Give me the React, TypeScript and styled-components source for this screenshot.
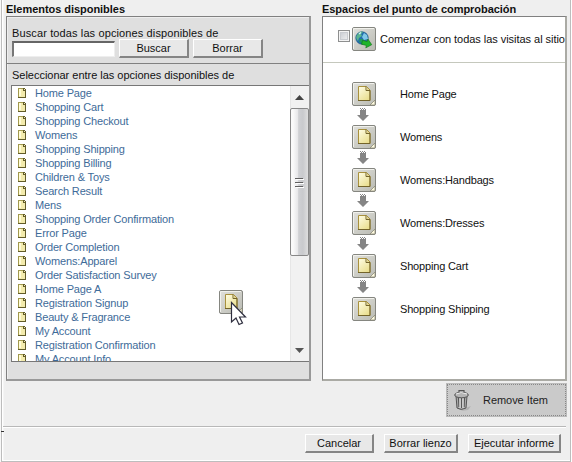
import React from "react";
import styled, { createGlobalStyle } from "styled-components";

const Global = createGlobalStyle`
  *, *::before, *::after { box-sizing: border-box; }
  body { margin: 0; background: #efefef; overflow: hidden; }
  button, input { font: inherit; }
`;

const Window = styled.div`
  width: 570px;
  height: 462px;
  margin-left: 1px;
  border: solid #bdbdbd;
  border-width: 0 1px 1px 1px;
  box-shadow: inset 1px 0 #fff, inset 2px 0 #fff6, inset 0 -1px #fff, 1px 0 #fff, -1px 0 #f8f8f8;
  background: #efefef;
  font: 11px/14px "Liberation Sans", Arial, sans-serif;
  color: #111;
  display: flex;
  flex-direction: column;
  position: relative;
`;

const Columns = styled.div`
  display: grid;
  grid-template-columns: 305px 245px;
  column-gap: 11px;
  padding-left: 4px;
  height: 381px;
`;

const Column = styled.section`
  display: flex;
  flex-direction: column;
  min-width: 0;
`;

const Label = styled.span<{ $spacing?: number }>`
  display: block;
  white-space: nowrap;
  letter-spacing: ${(p) => p.$spacing ?? 0}px;
`;

const Heading = styled.h2`
  margin: 0;
  height: 16px;
  padding-top: 2px;
  font-size: 11px;
  line-height: 14px;
  white-space: nowrap;
  letter-spacing: -0.04px;
`;

const Panel = styled.div<{ $plain?: boolean }>`
  height: 365px;
  border: 1px solid #808080;
  background: ${(p) => (p.$plain ? "#fff" : "#dfdfdf")};
  border-right: ${(p) => (p.$plain ? "2px solid #aaaaa4" : "2px solid #999")};
  border-bottom: ${(p) => (p.$plain ? "2px solid #aaaaa4" : "2px solid #999")};
  box-shadow: ${(p) => (p.$plain ? "none" : "inset 1px 1px #eee")};
`;

const Search = styled.div`
  height: 47px;
  padding: 9px 0 0 5px;
  border-bottom: 1px solid #808080;
`;

const SearchRow = styled.div`
  display: flex;
  align-items: flex-start;
  height: 20px;
  margin-top: -1px;
`;

const Field = styled.input`
  width: 103px;
  height: 16px;
  margin: 2px 4px 0 0;
  padding: 0 2px;
  background: #fff;
  border: solid;
  border-width: 2px 1px 1px 2px;
  border-color: #666 #eee #eee #777;
  outline: 0;
`;

const PushButton = styled.button<{ $w: number }>`
  width: ${(p) => p.$w}px;
  height: 19px;
  margin: 0 4px 0 0;
  padding: 0;
  background: #e8e8e8;
  border: solid;
  border-width: 1px 2px 2px 1px;
  border-color: #fff #858585 #858585 #fff;
  color: #111;
  line-height: 15px;
  white-space: nowrap;
`;

const ListTitle = styled.div`
  padding: 4px 0 0 5px;
  height: 21px;
`;

const ListBox = styled.div`
  margin-left: 4px;
  height: 277px;
  background: #fff;
  border: 1px solid #777;
  border-right: 0;
  display: flex;
  position: relative;
`;

const Items = styled.ul`
  list-style: none;
  margin: 0;
  padding: 0 0 0 6px;
  flex: 1;
  height: 275px;
  overflow: hidden;
  color: #3e6b99;
`;

const Item = styled.li`
  display: flex;
  align-items: center;
  gap: 9px;
  height: 14px;
  white-space: nowrap;
  letter-spacing: -0.15px;
`;

const Scrollbar = styled.div`
  width: 19px;
  background: #f1f1f1;
  border-left: 1px solid #e6e6e6;
  display: flex;
  flex-direction: column;
  align-items: stretch;
`;

const ScrollArrow = styled.div`
  height: 22px;
  padding-right: 1px;
  display: flex;
  align-items: center;
  justify-content: center;
`;

const Track = styled.div`
  flex: 1;
`;

const Thumb = styled.div`
  height: 148px;
  margin-left: -1px;
  border: 1px solid #888;
  border-radius: 2px;
  background: linear-gradient(90deg, #fafafa 0 12%, #e7e7e9 40%, #cfd0d3 45%, #c9cacd 70%, #dedede);
  display: flex;
  align-items: center;
  justify-content: center;
`;

const Drag = styled.div`
  position: absolute;
  left: 207px;
  top: 204px;
`;

const AllVisits = styled.div`
  height: 46px;
  border-bottom: 1px solid #c5c8bd;
  padding: 10px 0 0 15px;
  display: flex;
  align-items: flex-start;
`;

const Checkbox = styled.span`
  width: 12px;
  height: 12px;
  flex: none;
  margin: 3px 2px 0 0;
  border: 1px solid #8e8f8f;
  background: linear-gradient(135deg, #c2c6cd, #f5f5f5);
  box-shadow: inset 0 0 0 1px #f4f4f4, inset 0 0 0 2px #c9ccd1;
`;

const VisitsText = styled.div`
  margin: 5px 0 0 4px;
`;

const Flow = styled.ol`
  list-style: none;
  margin: 0;
  padding: 19px 0 0 29px;
`;

const Step = styled.li`
  height: 43px;
  display: grid;
  grid-template-columns: 24px auto;
  grid-template-rows: 24px 19px;
  column-gap: 24px;
`;

const StepName = styled.span`
  padding-top: 5px;
  white-space: nowrap;
  letter-spacing: -0.17px;
`;

const ArrowCell = styled.div`
  padding: 2px 0 0 5px;
  height: 19px;
`;

const RemoveRow = styled.div`
  display: flex;
  justify-content: flex-end;
  height: 45px;
  padding: 2px 3px 0 0;
`;

const RemoveButton = styled.button`
  width: 121px;
  height: 34px;
  padding: 0 0 0 6px;
  background: #cacaca;
  border: 1px solid #bbb;
  outline: 1px dotted #888;
  outline-offset: -2px;
  display: flex;
  align-items: center;
  gap: 11px;
  color: #222;
  letter-spacing: -0.05px;
`;

const Footer = styled.footer`
  margin: 0 4px 0 1px;
  border-top: 1px solid #b8b8b8;
  box-shadow: inset 0 1px #fff;
  height: 34px;
  padding: 7px 0 0 302px;
  display: flex;
  gap: 6px;
`;

const Tick = styled.span`
  position: absolute;
  left: -1px;
  top: 431px;
  width: 3px;
  height: 1px;
  background: #333;
`;

const Drawing = styled.svg`
  display: block;
  flex: none;
`;

const SmallPage = () => (
  <Drawing width="8" height="10" viewBox="0 0 8 10" shapeRendering="crispEdges">
    <path d="M0 0H6L8 2V10H0Z" fill="#a29a4e" />
    <path d="M1 1H5V3H7V9H1Z" fill="#f3ebad" />
    <path d="M1 1H3V8H1Z" fill="#fffbd6" />
    <path d="M5 0H7V1H8V3H5Z M7 3H8V10H0V9H7Z" fill="#625c29" />
    <path d="M6 1H7V2H6Z" fill="#f3edbd" />
  </Drawing>
);

const Tile = ({ children, corner = false }: { children: React.ReactNode; corner?: boolean }) => (
  <Drawing width="24" height="24" viewBox="0 0 24 24">
    <defs>
      <linearGradient id="tile" x2="1" y2="1">
        <stop stopColor="#e1e1dc" />
        <stop offset="1" stopColor="#b9bab2" />
      </linearGradient>
      <linearGradient id="paper" x2="0.7" y2="1">
        <stop stopColor="#fffde5" />
        <stop offset="1" stopColor="#eadf91" />
      </linearGradient>
    </defs>
    <rect x="0.5" y="0.5" width="23" height="23" rx="1.5" fill="url(#tile)" stroke="#858680" />
    <path d="M1.5 22V1.5H22" fill="none" stroke="#f1f1ec" />
    {children}
    {corner && <path d="M23 18V23H18Z" fill="#fffbe0" stroke="#8a8a78" strokeWidth=".8" />}
  </Drawing>
);

const PageTile = () => (
  <Tile corner>
    <path d="M6.5 4.5H14.5L18 8V18.5H6.5Z" fill="url(#paper)" stroke="#a9913d" />
    <path d="M14 4.5V8.5H18V18.5H6" fill="none" stroke="#73642a" />
    <path d="M14.8 5.5V7.7H17Z" fill="#d8c981" />
  </Tile>
);

const GlobeTile = () => (
  <Tile>
    <circle cx="10" cy="11" r="6.2" fill="#236fae" stroke="#195583" strokeWidth=".7" />
    <path d="M5 8Q8 3 11 5L9 7 10 9 7 11 6 14Q3 11 5 8Z" fill="#5ab58f" />
    <path d="M12 6L15 8 16 12 12 13 10 10Z" fill="#81c9e8" />
    <path d="M8 12L11 12 10 16 7 15Z" fill="#1f9b5f" />
    <path d="M7 7L9 5.5" stroke="#d4f5ff" strokeWidth="1.3" />
    <path d="M10 14.5H15V12L20 16.5 15 21V18.5H10Z" transform="rotate(14 15 16)" fill="#20b52b" stroke="#14771c" strokeWidth=".6" />
  </Tile>
);

const DownArrow = () => (
  <Drawing width="12" height="14" viewBox="0 0 12 14">
    <path d="M3 2H9V7H12L6 13 0 7H3Z" fill="#858585" />
    <path d="M3 .5H4M5 .5H6M7 .5H8M4 1.5H5M6 1.5H7M8 1.5H9" stroke="#858585" />
  </Drawing>
);

const TrashIcon = () => (
  <Drawing width="19" height="23" viewBox="0 0 19 23">
    <path d="M13 19L18 17 15 21 8 22Z" fill="#999" opacity=".5" />
    <path d="M3 7H14L13 19Q8 22 4 19Z" fill="#aaa" stroke="#555" />
    <path d="M5.5 9L6 18M8.5 9V19M11.5 9L11 18" stroke="#555" strokeWidth="1.2" />
    <path d="M7 9V19M10 9V19" stroke="#eee" />
    <ellipse cx="8.5" cy="6" rx="6.8" ry="2.8" fill="#b5b5b5" stroke="#555" />
    <path d="M3 5Q8 2 14 5" stroke="#eee" fill="none" />
    <path d="M6 3V1.5H11V3" fill="none" stroke="#555" strokeWidth="1.2" />
  </Drawing>
);

const DraggedPage = () => (
  <Drawing width="30" height="38" viewBox="0 0 30 38">
    <PageTile />
    <path d="M12.5 12.5V32L17 28 20 34.5 23.5 33 20.5 27H26.5Z" fill="#fff" stroke="#2e2e3e" strokeWidth="1.2" />
  </Drawing>
);

const Grip = () => (
  <Drawing width="9" height="11" shapeRendering="crispEdges">
    <path d="M0 1.5H8M0 5.5H8M0 9.5H8" stroke="#606060" />
    <path d="M1 2.5H9M1 6.5H9M1 10.5H9" stroke="#fff" />
  </Drawing>
);

const available = [
  "Home Page", "Shopping Cart", "Shopping Checkout", "Womens", "Shopping Shipping",
  "Shopping Billing", "Children & Toys", "Search Result", "Mens",
  "Shopping Order Confirmation", "Error Page", "Order Completion", "Womens:Apparel",
  "Order Satisfaction Survey", "Home Page A", "Registration Signup", "Beauty & Fragrance",
  "My Account", "Registration Confirmation", "My Account Info",
];

const checkpoints = ["Home Page", "Womens", "Womens:Handbags", "Womens:Dresses", "Shopping Cart", "Shopping Shipping"];

export default function App() {
  return (
    <>
      <Global />
      <Window>
        <Columns>
          <Column>
            <Heading>Elementos disponibles</Heading>
            <Panel>
              <Search>
                <Label $spacing={0.12}>Buscar todas las opciones disponibles de</Label>
                <SearchRow>
                  <Field aria-label="Buscar" />
                  <PushButton $w={70}>Buscar</PushButton>
                  <PushButton $w={70}>Borrar</PushButton>
                </SearchRow>
              </Search>
              <ListTitle>
                <Label $spacing={-0.02}>Seleccionar entre las opciones disponibles de</Label>
              </ListTitle>
              <ListBox>
                <Items>
                  {available.map((name) => (
                    <Item key={name}><SmallPage />{name}</Item>
                  ))}
                </Items>
                <Scrollbar>
                  <ScrollArrow>
                    <Drawing width="9" height="5"><path d="M0 5L4.5 0 9 5Z" fill="#444" /></Drawing>
                  </ScrollArrow>
                  <Thumb><Grip /></Thumb>
                  <Track />
                  <ScrollArrow>
                    <Drawing width="9" height="5"><path d="M0 0L4.5 5 9 0Z" fill="#555" /></Drawing>
                  </ScrollArrow>
                </Scrollbar>
                <Drag><DraggedPage /></Drag>
              </ListBox>
            </Panel>
          </Column>
          <Column>
            <Heading>Espacios del punto de comprobación</Heading>
            <Panel $plain>
              <AllVisits>
                <Checkbox />
                <GlobeTile />
                <VisitsText>
                  <Label $spacing={-0.04}>Comenzar con todas las visitas al sitio</Label>
                </VisitsText>
              </AllVisits>
              <Flow>
                {checkpoints.map((name, i) => (
                  <Step key={name}>
                    <PageTile />
                    <StepName>{name}</StepName>
                    {i < checkpoints.length - 1 && <ArrowCell><DownArrow /></ArrowCell>}
                  </Step>
                ))}
              </Flow>
            </Panel>
          </Column>
        </Columns>
        <RemoveRow>
          <RemoveButton><TrashIcon />Remove Item</RemoveButton>
        </RemoveRow>
        <Footer>
          <PushButton $w={69}>Cancelar</PushButton>
          <PushButton $w={74}>Borrar lienzo</PushButton>
          <PushButton $w={93}>Ejecutar informe</PushButton>
        </Footer>
        <Tick />
      </Window>
    </>
  );
}
